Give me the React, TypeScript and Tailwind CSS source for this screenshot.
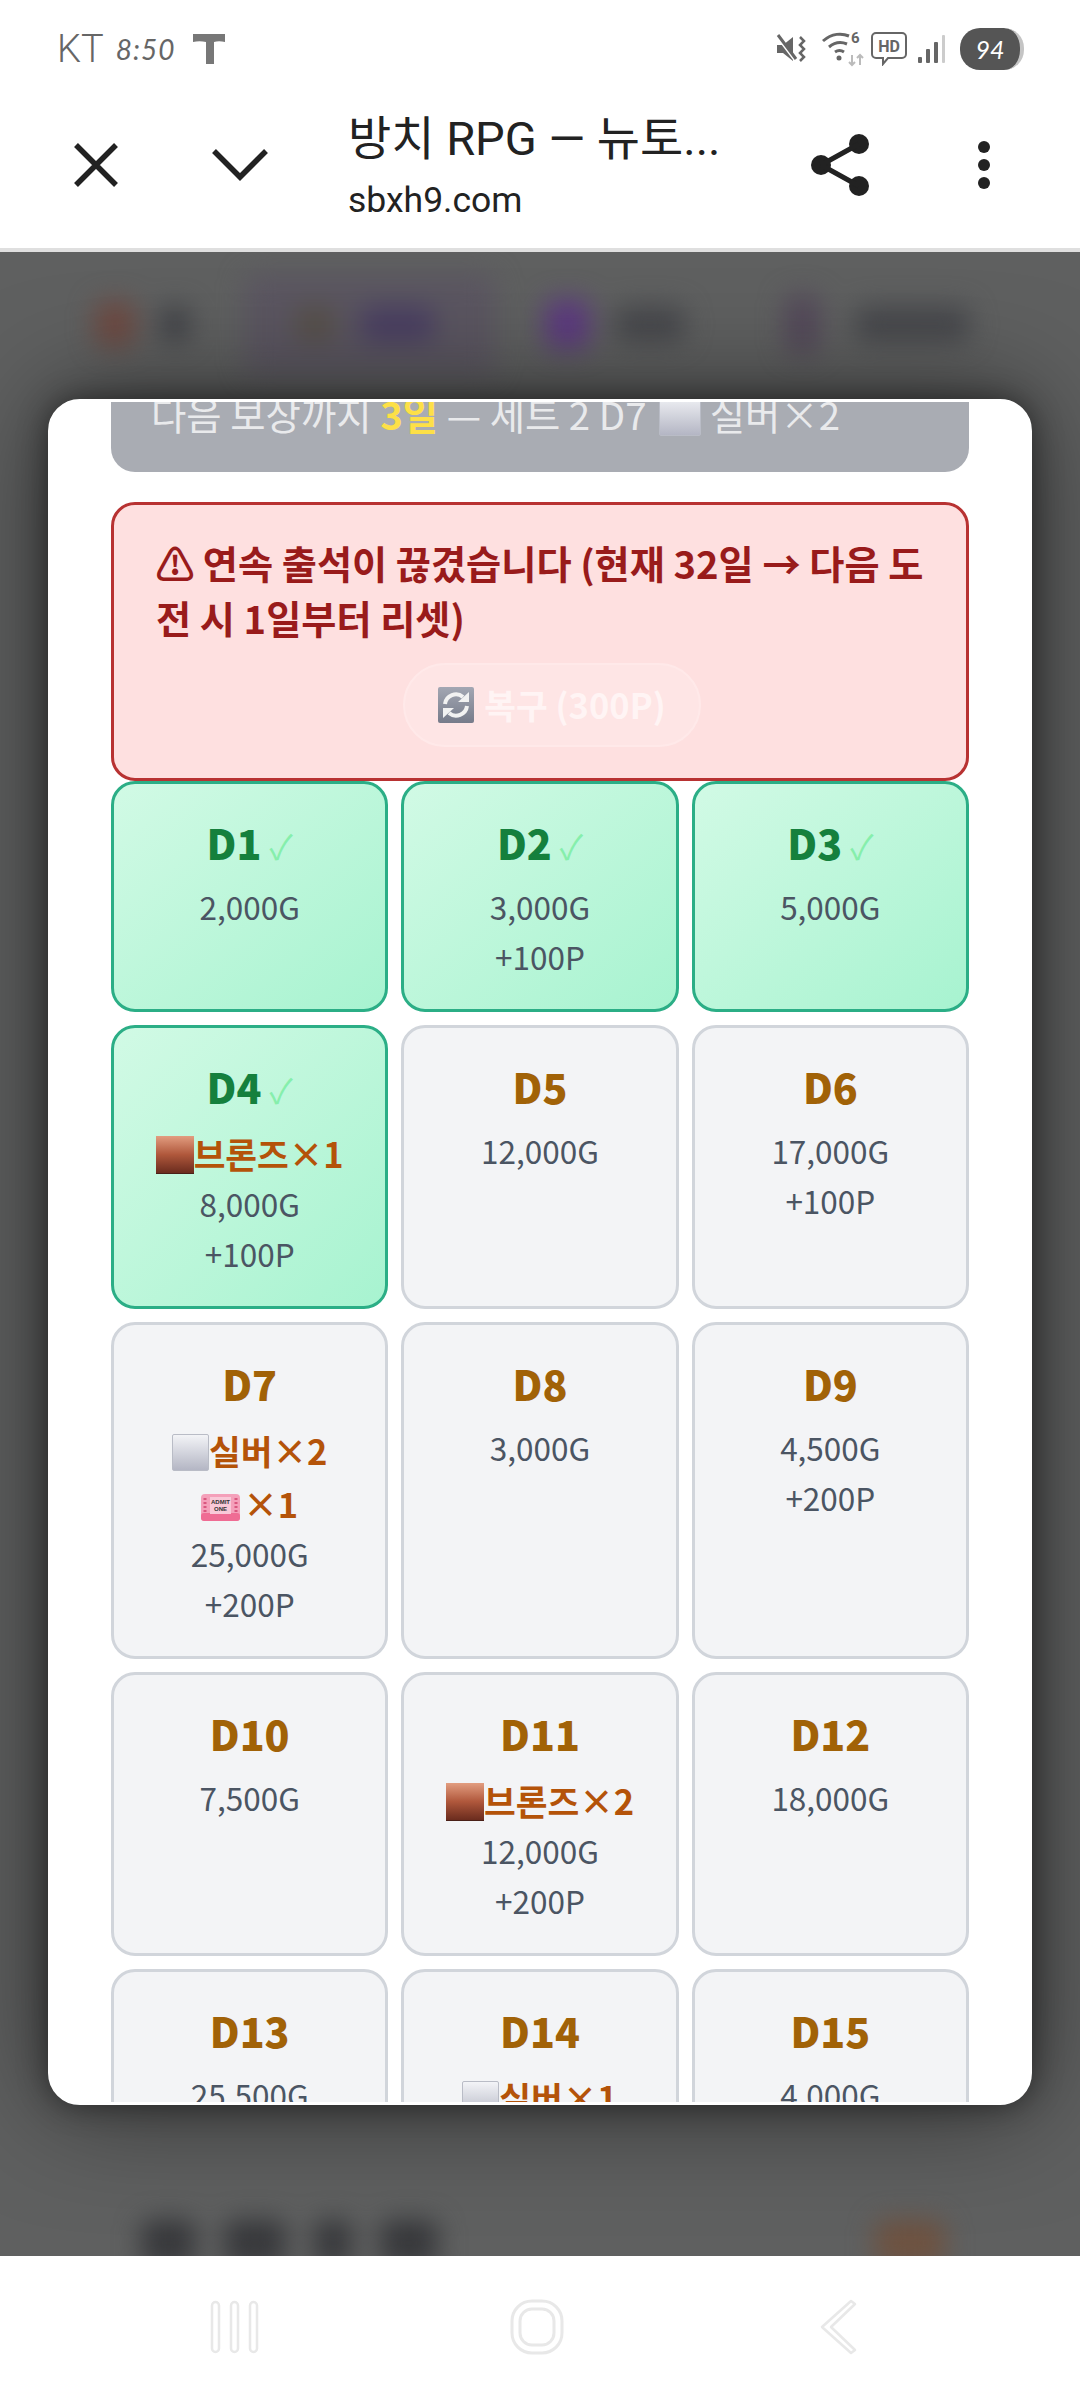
import React from "react";

const F = { fontFamily: '"Noto Sans CJK KR", "Noto Sans", sans-serif' };

function SilverBox({ s = 37, className = "" }: { s?: number; className?: string }) {
  return <span className={"inline-block align-[-6px] border border-[#b9bcc6] bg-gradient-to-b from-[#f3f4f7] to-[#b4b6c4] " + className} style={{ width: s, height: s, borderRadius: 2 }} />;
}
function BronzeBox() {
  return <span className="inline-block w-[38px] h-[38px] align-[-6px] border-b border-[#4a2018] bg-gradient-to-b from-[#e29d80] via-[#b0583c] to-[#6b2c1e]" />;
}
function Ticket() {
  return (
    <svg className="inline-block align-[-3px] mr-[3px]" width="39" height="27" viewBox="0 0 39 27">
      <rect x="0" y="0" width="39" height="27" rx="4" fill="#f4a0ba" />
      <rect x="0" y="19" width="39" height="8" rx="3" fill="#ef6c94" />
      <rect x="9" y="3" width="21" height="17" fill="#f9c9d8" />
      <path d="M4 4v16M35 4v16" stroke="#d9577f" strokeWidth="3" strokeDasharray="2 2" />
      <text x="19.500" y="10" fontSize="6" fontWeight="700" textAnchor="middle" fill="#333" fontFamily="Liberation Sans">ADMIT</text>
      <text x="19.500" y="16.500" fontSize="6" fontWeight="700" textAnchor="middle" fill="#333" fontFamily="Liberation Sans">ONE</text>
    </svg>
  );
}
function Refresh() {
  return (
    <svg className="inline-block mr-[10px] shrink-0" width="36" height="36" viewBox="0 0 36 36">
      <defs>
        <linearGradient id="rg" x1="0" y1="0" x2="0" y2="1">
          <stop offset="0" stopColor="#a3a7b3" />
          <stop offset="1" stopColor="#767b8a" />
        </linearGradient>
      </defs>
      <rect width="36" height="36" rx="2" fill="url(#rg)" />
      <path d="M7 17a11 11 0 0 1 18-7" fill="none" stroke="#f2f2f2" strokeWidth="4" />
      <path d="M29 19a11 11 0 0 1-18 7" fill="none" stroke="#f2f2f2" strokeWidth="4" />
      <path d="M20 15h11V5zM16 21H5v10z" fill="#f2f2f2" />
    </svg>
  );
}

type Day = { d: string; done?: boolean; rewards?: React.ReactNode[]; lines: string[] };
const days: Day[] = [
  { d: "D1", done: true, lines: ["2,000G"] },
  { d: "D2", done: true, lines: ["3,000G", "+100P"] },
  { d: "D3", done: true, lines: ["5,000G"] },
  { d: "D4", done: true, rewards: [<><BronzeBox />브론즈×1</>], lines: ["8,000G", "+100P"] },
  { d: "D5", lines: ["12,000G"] },
  { d: "D6", lines: ["17,000G", "+100P"] },
  { d: "D7", rewards: [<><SilverBox />실버×2</>, <><Ticket />×1</>], lines: ["25,000G", "+200P"] },
  { d: "D8", lines: ["3,000G"] },
  { d: "D9", lines: ["4,500G", "+200P"] },
  { d: "D10", lines: ["7,500G"] },
  { d: "D11", rewards: [<><BronzeBox />브론즈×2</>], lines: ["12,000G", "+200P"] },
  { d: "D12", lines: ["18,000G"] },
  { d: "D13", lines: ["25,500G"] },
  { d: "D14", rewards: [<><SilverBox />실버×1</>], lines: ["8,000G"] },
  { d: "D15", lines: ["4,000G"] },
];

function Card({ day }: { day: Day }) {
  return (
    <div
      className={
        "rounded-[24px] border-[3px] pt-[29.500px] pb-[27.500px] px-[6px] text-center " +
        (day.done
          ? "border-[#2bae86] bg-gradient-to-br from-[#d1fae5] to-[#a7f3d0]"
          : "border-[#d1d5db] bg-[#f3f4f6]")
      }
    >
      <div className={"h-[58px] text-[41px] leading-[58px] font-black " + (day.done ? "text-[#15803d]" : "text-[#a16207]")}>
        {day.d}
        {day.done && <span className="ml-[8px] text-[34px] leading-none font-normal text-[#86efac]">✓</span>}
      </div>
      {day.rewards && (
        <div className="mt-[12px] -mb-[1px]">
          {day.rewards.map((r, i) => (
            <div key={i} className="h-[53px] text-[34.500px] leading-[53px] font-bold text-[#b45309] whitespace-nowrap">{r}</div>
          ))}
        </div>
      )}
      <div className={day.rewards ? "" : "mt-[11px]"}>
        {day.lines.map((l) => (
          <div key={l} className="text-[31.500px] leading-[49.500px] text-[#4b5563]">{l}</div>
        ))}
      </div>
    </div>
  );
}

function Blob({ className }: { className: string }) {
  return <div className={"rounded-[12px] " + className} />;
}

export default function App() {
  return (
    <div className="w-[1080px] h-[2400px] overflow-hidden flex flex-col bg-white" style={F}>
      {/* status bar */}
      <div className="h-[98px] flex items-center justify-between pl-[57px] pr-[56px] shrink-0 text-[#666]">
        <div className="flex items-center">
          <span className="text-[38px] leading-none" style={{ fontFamily: "Roboto, sans-serif", fontWeight: 300 }}>KT</span>
          <span className="ml-[12px] text-[28px] leading-none italic tracking-[1px]" style={{ fontFamily: 'Lato, sans-serif' }}>8:50</span>
          <svg className="ml-[18px]" width="32" height="32" viewBox="0 0 32 32">
            <path d="M0 1h32v8c-4-1-8-1-11 0v22h-8V9C9 8 4 8 0 9z" fill="#777" />
          </svg>
        </div>
        <div className="flex items-center">
          <svg width="30" height="30" viewBox="0 0 30 30" fill="#666">
            <path d="M1 11h6l10-8v24l-10-8H1z" />
            <path d="M1 2l18 24" stroke="#fff" strokeWidth="3" />
            <path d="M2 1l18 24" stroke="#666" strokeWidth="3" />
            <path d="M24 3l4 4-4 4 4 4-4 4 4 4-4 4" fill="none" stroke="#666" strokeWidth="2.500" />
          </svg>
          <svg className="ml-[15px]" width="44" height="40" viewBox="0 0 44 40" fill="none">
            <path d="M2 12c9-8 19-8 26-5M8 18c6-5 13-5 18-3M14 23c3-2 6-2 9 0" stroke="#666" strokeWidth="3" />
            <circle cx="18" cy="29" r="2.500" fill="#666" />
            <path d="M31 26v10m-3-3l3 3 3-3M39 36V26m-3 3l3-3 3 3" stroke="#bbb" strokeWidth="2" />
            <text x="30" y="14" fontSize="15" fontWeight="700" fill="#666" fontFamily="Roboto">6</text>
          </svg>
          <svg className="ml-[6px]" width="36" height="34" viewBox="0 0 36 34" fill="none">
            <path d="M5 1h26a4 4 0 0 1 4 4v17a4 4 0 0 1-4 4H17l-5 6v-6H5a4 4 0 0 1-4-4V5a4 4 0 0 1 4-4z" stroke="#666" strokeWidth="2" />
            <text x="18" y="20" fontSize="16" fontWeight="700" textAnchor="middle" fill="#666" fontFamily="Roboto">HD</text>
          </svg>
          <svg className="ml-[11px]" width="28" height="30" viewBox="0 0 28 30">
            <rect x="0" y="23" width="4" height="6" rx="1" fill="#666" />
            <rect x="8" y="15" width="4" height="14" rx="1" fill="#666" />
            <rect x="16" y="8" width="4" height="21" rx="1" fill="#666" />
            <rect x="24" y="1" width="3" height="28" rx="1" fill="#ccc" />
          </svg>
          <div className="ml-[14px] w-[64px] h-[42px] rounded-[20px] bg-[#555] border-r-[4px] border-[#c4c4c4] flex items-center justify-center text-[25px] text-white italic leading-none" style={{ fontFamily: 'Lato, sans-serif' }}>
            94
          </div>
        </div>
      </div>

      {/* browser header */}
      <div className="h-[150px] pb-[16px] flex items-center shrink-0 text-[#222]">
        <svg className="ml-[73px]" width="46" height="44" viewBox="0 0 46 44" fill="none" stroke="#222" strokeWidth="5.500">
          <path d="M3 2l40 40M43 2L3 42" />
        </svg>
        <svg className="ml-[92px]" width="58" height="34" viewBox="0 0 58 34" fill="none" stroke="#222" strokeWidth="5.500">
          <path d="M3 3l26 26L55 3" />
        </svg>
        <div className="ml-[79px] w-[440px] pt-[3px]">
          <div className="text-[47px] leading-[56px] whitespace-nowrap" style={{ fontFamily: 'Roboto, "Noto Sans CJK KR", sans-serif' }}>방치 RPG — 뉴토...</div>
          <div className="text-[35.500px] leading-[46px] mt-[10px]" style={{ fontFamily: 'Roboto, sans-serif' }}>sbxh9.com</div>
        </div>
        <svg className="ml-[22px]" width="62" height="64" viewBox="0 0 62 64" fill="#222">
          <circle cx="11" cy="32" r="10" />
          <circle cx="49" cy="11" r="10" />
          <circle cx="49" cy="53" r="10" />
          <path d="M11 32L49 11M11 32l38 21" stroke="#222" strokeWidth="5" />
        </svg>
        <svg className="ml-[105px]" width="14" height="50" viewBox="0 0 14 50" fill="#222">
          <circle cx="7" cy="7" r="6" />
          <circle cx="7" cy="25" r="6" />
          <circle cx="7" cy="43" r="6" />
        </svg>
      </div>
      <div className="h-[4px] bg-[#dfdfdf] shrink-0" />

      {/* main */}
      <div className="relative flex-1 min-h-0 bg-[#5f6060] overflow-hidden">
        {/* blurred page behind the dialog */}
        <div className="absolute inset-0 flex flex-col justify-between blur-[13px]">
          <div className="flex items-center pl-[95px] pt-[22px]">
            <Blob className="w-[40px] h-[46px] bg-[#6e4a42]" />
            <Blob className="ml-[25px] w-[30px] h-[36px] bg-[#414247]" />
            <div className="ml-[55px] w-[250px] h-[100px] rounded-[12px] bg-[#5b5661] flex items-center pl-[50px]">
              <Blob className="w-[40px] h-[36px] bg-[#575049]" />
              <Blob className="ml-[25px] w-[75px] h-[36px] bg-[#4a3f62]" />
            </div>
            <Blob className="ml-[50px] w-[45px] h-[50px] bg-[#5d3a80]" />
            <Blob className="ml-[25px] w-[70px] h-[36px] bg-[#47484c]" />
            <Blob className="ml-[100px] w-[35px] h-[60px] bg-[#54495a]" />
            <Blob className="ml-[35px] w-[115px] h-[36px] bg-[#47484c]" />
          </div>
          <div className="flex items-end justify-between pl-[141px] pr-[135px] -mb-[10px]">
            <div className="flex gap-[28px]">
              <Blob className="w-[55px] h-[46px] bg-[#37383b]" />
              <Blob className="w-[62px] h-[46px] bg-[#37383b]" />
              <Blob className="w-[38px] h-[46px] bg-[#37383b]" />
              <Blob className="w-[58px] h-[46px] bg-[#37383b]" />
            </div>
            <Blob className="w-[70px] h-[46px] bg-[#6e5240]" />
          </div>
        </div>

        {/* dialog */}
        <div className="relative mt-[147px] mx-[48px] h-[1706px] rounded-[32px] border-[3px] border-white bg-white overflow-hidden shadow-[0_0_30px_rgba(0,0,0,0.45),0_0_110px_rgba(0,0,0,0.55)]">
          <div className="h-full overflow-hidden px-[60px]">
            <div className="-mt-[36px]">
              <div className="h-[106px] rounded-b-[24px] bg-[#a9acb3] pt-[21px] pl-[40px] text-[38.400px] leading-[52px] text-[#e9eaec] whitespace-nowrap">
                다음 보상까지 <b className="text-[#fde047]">3일</b> — 세트 2 D7 <SilverBox s={42} className="ml-[4px]" /> 실버×2
              </div>

              <div className="mt-[30px] h-[278.500px] rounded-[24px] border-[3px] border-[#b83232] bg-[#fee0e0] pl-[42px] pr-[36px] pt-[30px] text-[#991b1b]">
                <div className="text-[38.200px] leading-[55px] font-bold">⚠ 연속 출석이 끊겼습니다 (현재 32일 → 다음 도전 시 1일부터 리셋)</div>
                <div className="flex justify-center mt-[18px] pl-[18px]">
                  <div className="w-[298px] h-[84px] rounded-full border-[2px] border-[#ffe9e9] bg-[#fee5e5] flex items-center justify-center text-[34.500px] font-bold text-[#fff4f4] whitespace-nowrap">
                    <Refresh />복구 (300P)
                  </div>
                </div>
              </div>

              <div className="grid grid-cols-3 gap-x-[13px] gap-y-[13px]">
                {days.map((day) => (
                  <Card key={day.d} day={day} />
                ))}
              </div>
            </div>
          </div>
        </div>
      </div>

      {/* nav bar */}
      <div className="h-[144px] shrink-0 bg-white flex items-start relative">
        <svg className="ml-[210px] mt-[44px]" width="50" height="54" viewBox="0 0 50 54" fill="none" stroke="#e8e8e8" strokeWidth="2.500">
          <rect x="2" y="2" width="7" height="50" rx="3.500" />
          <rect x="21" y="2" width="7" height="50" rx="3.500" />
          <rect x="40" y="2" width="7" height="50" rx="3.500" />
        </svg>
        <svg className="ml-[250px] mt-[43px]" width="54" height="56" viewBox="0 0 54 56" fill="none" stroke="#e8e8e8" strokeWidth="3">
          <rect x="2" y="2" width="50" height="52" rx="20" />
          <rect x="10" y="10" width="34" height="36" rx="12" />
        </svg>
        <svg className="ml-[255px] mt-[43px]" width="38" height="56" viewBox="0 0 38 56" fill="none" stroke="#e8e8e8" strokeWidth="2.500">
          <path d="M32 2L3 28l29 26 4-3-24-23L36 5z" strokeLinejoin="round" />
        </svg>
      </div>
    </div>
  );
}
